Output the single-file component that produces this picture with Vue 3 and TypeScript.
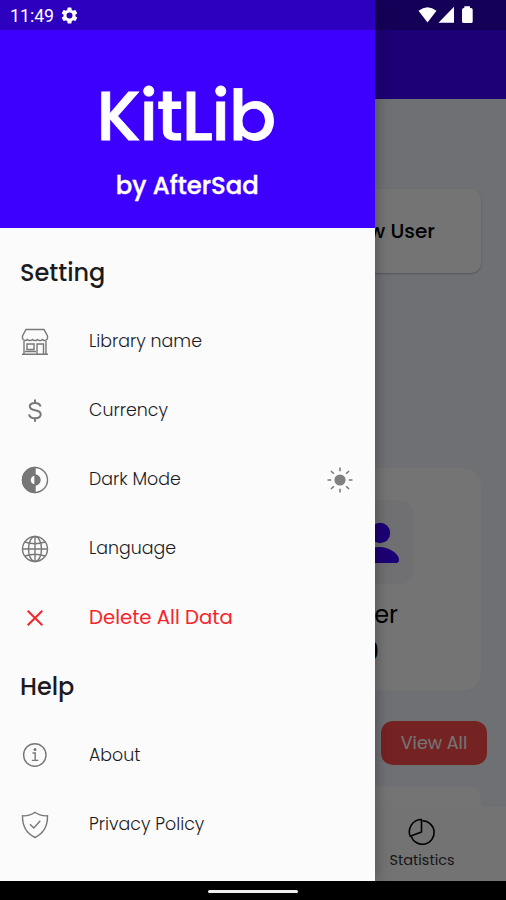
<script setup lang="ts">
type IconName = 'store' | 'dollar' | 'contrast' | 'globe' | 'close' | 'info' | 'shield'

interface MenuItem {
  label: string
  icon: IconName
  slug: string
  toggle?: boolean
}

interface MenuSection {
  title: string
  slug: string
  items: MenuItem[]
}

const sections: MenuSection[] = [
  {
    title: 'Setting',
    slug: 'setting',
    items: [
      { label: 'Library name', icon: 'store', slug: 'library' },
      { label: 'Currency', icon: 'dollar', slug: 'currency' },
      { label: 'Dark Mode', icon: 'contrast', slug: 'dark', toggle: true },
      { label: 'Language', icon: 'globe', slug: 'language' },
      { label: 'Delete All Data', icon: 'close', slug: 'delete' },
    ],
  },
  {
    title: 'Help',
    slug: 'help',
    items: [
      { label: 'About', icon: 'info', slug: 'about' },
      { label: 'Privacy Policy', icon: 'shield', slug: 'privacy' },
    ],
  },
]
</script>

<template>
  <div class="screen">
    <div class="page">
      <header class="appbar"></header>
      <main class="content">
        <section class="card new-user"><span>New User</span></section>
        <section class="card user-card">
          <div class="avatar">
            <svg viewBox="0 0 40 42" width="40" height="42">
              <circle cx="21" cy="11" r="10.2" />
              <path d="M1 41V38C1 29 11 25 20 25S40 31 40 38Q40 41 37 41Z" />
            </svg>
          </div>
          <div class="user-label">User</div>
          <div class="user-count">0</div>
        </section>
        <div class="actions"><button class="view-all">View All</button></div>
        <section class="card peek"></section>
      </main>
      <nav class="tabs">
        <div class="tab">
          <svg viewBox="0 0 28 28" width="28" height="28">
            <path d="M14.5 2.7A11.8 11.8 0 1 1 3.2 18.4" />
            <path d="M13.5 1.5V14L2.2 18.2A12.2 12.2 0 0 1 13.5 1.5Z" />
          </svg>
          <span>Statistics</span>
        </div>
      </nav>
    </div>
    <div class="scrim"></div>

    <aside class="drawer">
      <header class="brand">
        <h1>KitLib</h1>
        <p>by AfterSad</p>
      </header>
      <div class="menu">
        <template v-for="section in sections" :key="section.slug">
          <h2 :class="section.slug">{{ section.title }}</h2>
          <div v-for="item in section.items" :key="item.slug" class="row" :class="item.slug">
            <svg class="icon" viewBox="0 0 28 28" width="28" height="28">
              <g v-if="item.icon === 'store'">
                <path d="M5 1.5H23L26.5 8V10.5A3 3 0 0 1 21.5 11.5A3.5 3.5 0 0 1 16.5 11.5A3.5 3.5 0 0 1 11.5 11.5A3.5 3.5 0 0 1 6.5 11.5A3 3 0 0 1 1.5 10.5V8Z" />
                <path d="M3 13V26M25 13V26M1 26.3H27M6 16H13V21.5H6ZM16 26V16H22.5V26M4 23.5H15" />
              </g>
              <g v-else-if="item.icon === 'dollar'" class="bold">
                <path d="M14 2.5V6M14 21V24.8M19.5 9.5C19 7 17 6 14 6C11 6 8.8 7.2 8.8 9.6C8.8 15 19.7 11.5 19.7 17.3C19.7 19.8 17.3 21.3 14 21.3C10.8 21.3 8.5 20 8 17.4" />
              </g>
              <g v-else-if="item.icon === 'contrast'">
                <circle cx="14" cy="14" r="12.5" />
                <path class="solid" d="M14 1.5A12.5 12.5 0 0 0 14 26.5V19A5 5 0 0 1 14 9Z" />
                <path class="solid" d="M14 9A5 5 0 0 1 14 19Z" />
              </g>
              <g v-else-if="item.icon === 'globe'">
                <circle cx="14" cy="14" r="12.5" />
                <ellipse cx="14" cy="14" rx="6.5" ry="12.5" />
                <path d="M14 1.5V26.5M1.5 14H26.5M4 7Q14 10.5 24 7M4 21Q14 17.5 24 21" />
              </g>
              <g v-else-if="item.icon === 'close'" class="cross">
                <path d="M6.7 6.7L21.3 21.3M21.3 6.7L6.7 21.3" />
              </g>
              <g v-else-if="item.icon === 'info'">
                <circle cx="13.8" cy="14" r="11.2" />
                <path d="M11.5 12H14.2V19.2M10.8 19.4H17.2" />
                <circle class="solid" cx="14" cy="8.6" r=".8" />
              </g>
              <g v-else>
                <path d="M14 1.3C10.5 4 6 5 1.5 4.8C1.3 15 4.5 22 14 26.5C23.5 22 26.7 15 26.5 4.8C22 5 17.5 4 14 1.3Z" />
                <path d="M9 13.2L12.8 17L19.3 9.8" />
              </g>
            </svg>
            <span class="label">{{ item.label }}</span>
            <svg v-if="item.toggle" class="sun" viewBox="0 0 26 26" width="26" height="26">
              <circle cx="13" cy="13" r="5.6" />
              <path d="M13 .5V4.2M13 21.8V25.5M.5 13H4.2M21.8 13H25.5M4 4L6.8 6.8M19.2 19.2L22 22M22 4L19.2 6.8M6.8 19.2L4 22" />
            </svg>
          </div>
        </template>
      </div>
    </aside>

    <div class="status">
      <span class="time">11:49</span>
      <svg class="gear" viewBox="0 0 24 24" width="19" height="19">
        <path fill-rule="evenodd" d="M19.4 13a7.5 7.5 0 0 0 0-2l2.1-1.65a.5.5 0 0 0 .12-.64l-2-3.46a.5.5 0 0 0-.61-.22l-2.49 1a7.3 7.3 0 0 0-1.69-.98l-.38-2.65A.49.49 0 0 0 14 2h-4a.49.49 0 0 0-.49.42l-.38 2.65c-.61.25-1.17.59-1.69.98l-2.49-1a.5.5 0 0 0-.61.22l-2 3.46a.5.5 0 0 0 .12.64L4.57 11a7.9 7.9 0 0 0 0 2l-2.11 1.65a.5.5 0 0 0-.12.64l2 3.46a.5.5 0 0 0 .61.22l2.49-1c.52.4 1.08.73 1.69.98l.38 2.65A.49.49 0 0 0 10 22h4a.49.49 0 0 0 .49-.42l.38-2.65a7.7 7.7 0 0 0 1.69-.98l2.49 1a.5.5 0 0 0 .61-.22l2-3.46a.5.5 0 0 0-.12-.64ZM12 15.8a3.8 3.8 0 1 1 0-7.6a3.8 3.8 0 0 1 0 7.6Z" />
      </svg>
      <svg class="signals" viewBox="0 0 56 18" width="56" height="18">
        <path d="M.5 4.8Q9.5-2.5 18.5 4.8L9.5 16.5Z" />
        <path d="M36 .8V16.8H20.5Z" />
        <path d="M46.3 2V.3H52V2H53Q54.7 2 54.7 3.7V15.5Q54.7 17 53 17H46Q44 17 44 15.5V3.7Q44 2 46 2Z" />
      </svg>
    </div>
    <footer class="navbar"><span></span></footer>
  </div>
</template>

<style>
body {
  margin: 0;
  overflow: hidden;
}
</style>

<style scoped>
* {
  box-sizing: border-box;
}
.screen {
  position: relative;
  width: 506px;
  height: 900px;
  overflow: hidden;
  display: flex;
  flex-direction: column;
  font-family: Poppins, Inter, sans-serif;
  color: #1b1b1f;
}
.page {
  flex: 1;
  min-height: 0;
  display: flex;
  flex-direction: column;
  background: #f0f4fb;
}
.appbar {
  flex: none;
  height: 99px;
  background: #3d00ff;
}
.content {
  flex: 1;
  min-height: 0;
  overflow: hidden;
  padding: 90px 25px 0;
}
.card {
  background: #fdfdfd;
  border-radius: 14px;
}
.new-user {
  height: 84px;
  display: flex;
  align-items: center;
  justify-content: flex-end;
  padding-right: 46px;
  border-radius: 10px;
  box-shadow: 0 1px 2px rgba(0, 0, 0, 0.25);
  font-size: 20px;
  font-weight: 500;
  color: #000;
}
.user-card {
  width: 220px;
  height: 222px;
  margin: 195px 0 0 auto;
  border-radius: 18px;
  padding: 32px 0 0 68px;
}
.avatar {
  width: 84px;
  height: 84px;
  display: flex;
  align-items: center;
  justify-content: center;
  border-radius: 12px;
  background: #f3f5fa;
  fill: #3d00ff;
}
.avatar svg {
  margin-left: 16px;
  margin-top: 2px;
}
.user-label {
  width: 69px;
  margin-top: 16px;
  text-align: right;
  font-size: 24px;
  line-height: 30px;
  color: #000;
}
.user-count {
  width: 50px;
  margin-top: 6px;
  text-align: right;
  font-size: 24px;
  line-height: 32px;
  font-weight: 500;
  color: #000;
}
.actions {
  display: flex;
  justify-content: flex-end;
  margin: 31px -6px 0 0;
}
.view-all {
  width: 106px;
  height: 44px;
  border: 0;
  border-radius: 12px;
  padding: 0;
  background: #ff4b4b;
  color: #fff;
  font: inherit;
  font-size: 17.5px;
}
.peek {
  height: 60px;
  margin-top: 21px;
}
.tabs {
  flex: none;
  height: 74px;
  display: flex;
  justify-content: flex-end;
  background: #fbfbfb;
}
.tab {
  width: 168px;
  display: flex;
  flex-direction: column;
  align-items: center;
  padding-top: 11px;
  font-size: 14.5px;
  line-height: 28px;
  color: #333;
}
.tab svg {
  fill: none;
  stroke: #000;
  stroke-width: 1.6;
  stroke-linejoin: round;
}
.scrim {
  position: absolute;
  inset: 0;
  background: rgba(0, 0, 0, 0.54);
}
.drawer {
  position: absolute;
  inset: 0 auto 19px 0;
  width: 374.5px;
  background: #fbfbfc;
  box-shadow: 0 0 14px rgba(0, 0, 0, 0.35);
}
.brand {
  height: 228px;
  padding-top: 80px;
  background: #3d00ff;
  color: #fff;
  text-align: center;
}
.brand h1 {
  margin: 0;
  padding-right: 3px;
  font-size: 70px;
  line-height: 72px;
  font-weight: 500;
  letter-spacing: -1.2px;
  -webkit-text-stroke: 0.8px #fff;
}
.brand p {
  margin: 18px 0 0;
  font-size: 24.3px;
  line-height: 32px;
  font-weight: 500;
  -webkit-text-stroke: 0.4px #fff;
}
.menu {
  padding: 10px 20px 0;
}
.menu h2 {
  height: 69px;
  margin: 0;
  font-size: 24px;
  line-height: 69px;
  font-weight: 500;
}
.row {
  height: 69px;
  display: flex;
  align-items: center;
}
.icon {
  margin: 0 40px 0 1px;
  fill: none;
  stroke: #777;
  stroke-width: 1.4;
}
.about .icon {
  margin-top: -2px;
}
.solid {
  fill: #777;
}
.bold {
  stroke-width: 2;
}
.cross {
  stroke: #f3262b;
  stroke-width: 2;
}
.label {
  margin-top: -1px;
  font-size: 17.4px;
  font-weight: 300;
}
.delete .label {
  font-size: 19.7px;
  font-weight: 400;
  color: #f3262b;
}
.sun {
  margin: 0 2px 0 auto;
  fill: #808080;
  stroke: #777;
  stroke-width: 1.5;
}
.sun circle {
  stroke: none;
}
.status {
  position: absolute;
  inset: 0 0 auto;
  height: 30px;
  display: flex;
  align-items: center;
  padding: 0 32px 0 10px;
  background: rgba(0, 0, 0, 0.25);
  color: #fff;
  fill: #fff;
}
.time {
  font-family: Roboto, sans-serif;
  font-size: 17.7px;
  line-height: 20px;
  margin-top: 2px;
}
.gear {
  margin-left: 6px;
}
.signals {
  margin-left: auto;
}
.navbar {
  position: relative;
  flex: none;
  height: 19px;
  display: flex;
  justify-content: center;
  padding-top: 9px;
  background: #000;
}
.navbar span {
  width: 90px;
  height: 3px;
  border-radius: 2px;
  background: #eee;
}
</style>
